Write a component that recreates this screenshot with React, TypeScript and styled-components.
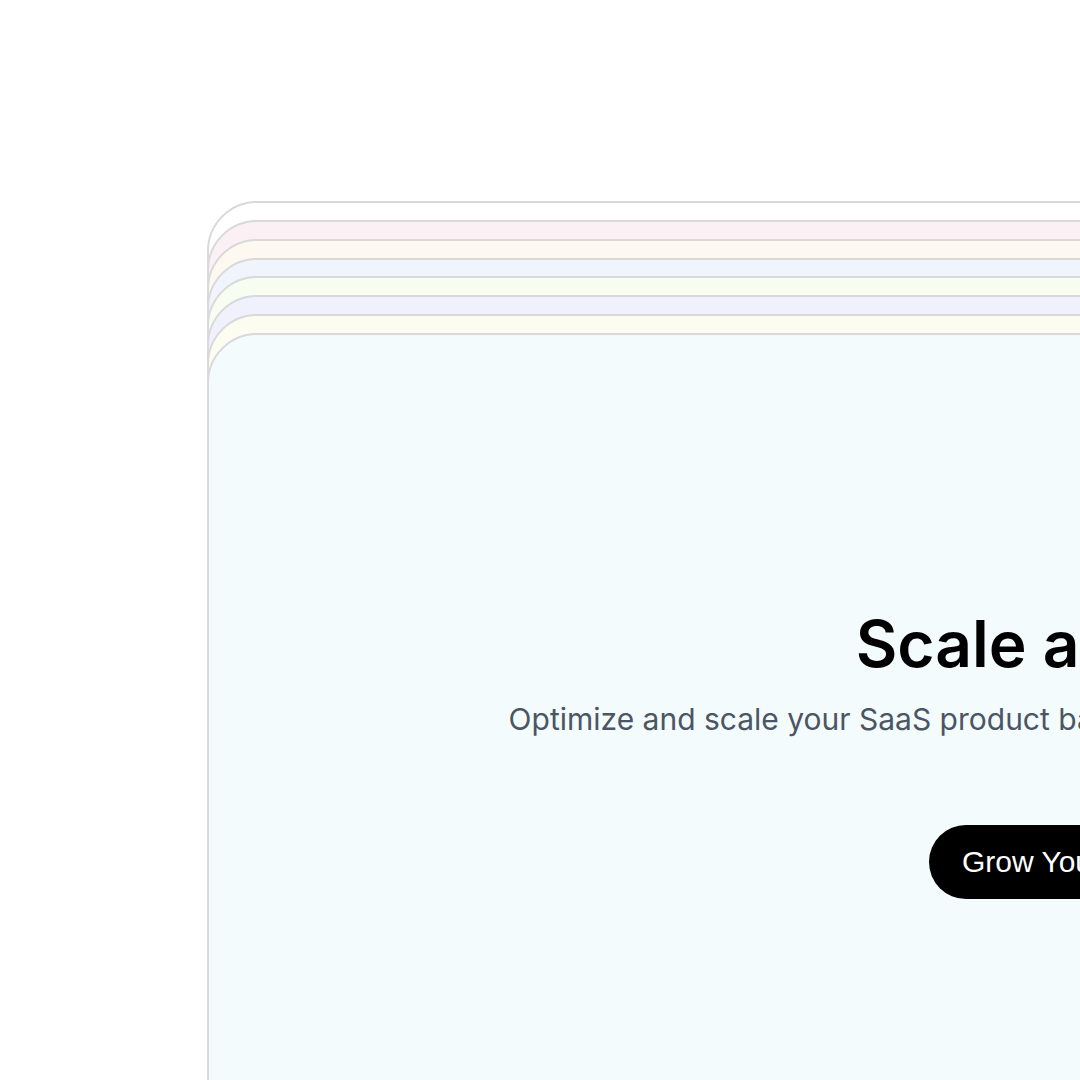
import React from "react";
import styled, { createGlobalStyle } from "styled-components";

const Global = createGlobalStyle`
  html, body { margin: 0; padding: 0; background: #ffffff; overflow: hidden; }
  body { font-family: Inter, "Noto Sans", sans-serif; }
`;

const Page = styled.div`
  width: 1080px;
  height: 1080px;
  overflow: hidden;
  padding: 201px 0 0 207px;
  box-sizing: border-box;
`;

const Stack = styled.div`
  display: grid;
  width: 1780px;
`;

const Card = styled.div<{ $bg: string; $offset: number }>`
  grid-area: 1 / 1;
  margin-top: ${(p) => p.$offset}px;
  height: 1100px;
  background: ${(p) => p.$bg};
  border: 2px solid #d9d9dc;
  border-radius: 50px 50px 0 0;
  box-sizing: border-box;
`;

const Content = styled.div`
  grid-area: 1 / 1;
  margin-top: 132px;
  display: flex;
  flex-direction: column;
  align-items: center;
  padding-top: 273px;
  position: relative;
`;

const Title = styled.h1`
  margin: 0;
  font-family: Inter, sans-serif;
  font-weight: 600;
  font-size: 64px;
  line-height: 1.2;
  color: #000000;
`;

const Subtitle = styled.p`
  margin: 15px 0 0;
  font-family: Inter, sans-serif;
  font-size: 30px;
  line-height: 1.4;
  color: #4b5563;
`;

const Button = styled.button`
  margin-top: 85px;
  height: 74px;
  padding: 0 33px;
  border: none;
  border-radius: 37px;
  background: #000000;
  color: #ffffff;
  font-family: "Liberation Sans", Arial, sans-serif;
  font-size: 30px;
`;

const colors = [
  "#ffffff",
  "#fbf0f3",
  "#fdf8f0",
  "#f0f5fd",
  "#f7fdf0",
  "#f1f0fd",
  "#fcfdf0",
  "#f3fbfd",
];

export default function App() {
  return (
    <>
      <Global />
      <Page>
        <Stack>
          {colors.map((c, i) => (
            <Card key={i} $bg={c} $offset={i * 18.85} />
          ))}
          <Content>
            <Title>Scale and Grow</Title>
            <Subtitle>
              Optimize and scale your SaaS product based on data-driven insights and analytics.
            </Subtitle>
            <Button>Grow Your Business</Button>
          </Content>
        </Stack>
      </Page>
    </>
  );
}
